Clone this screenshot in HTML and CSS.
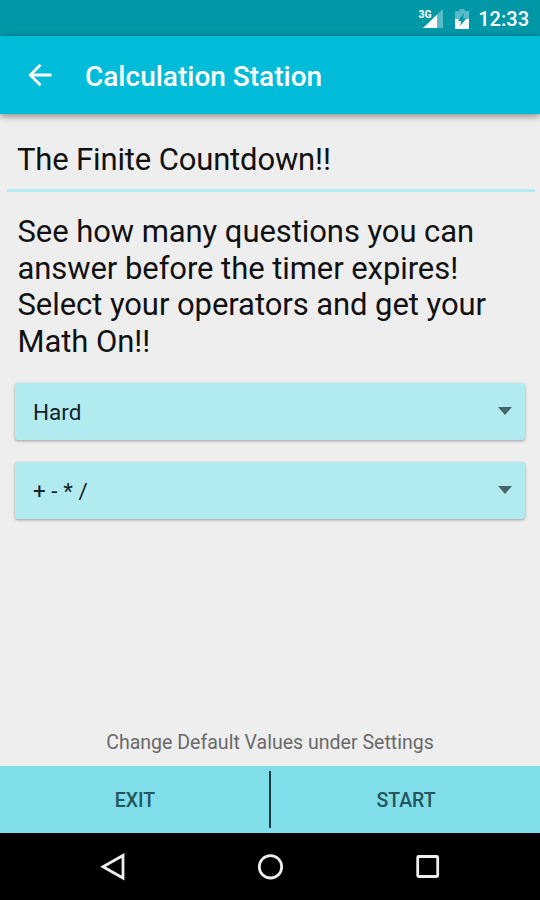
FILE: index.html
```
<!DOCTYPE html>
<html lang="en">
<head>
<meta charset="utf-8">
<title>Calculation Station</title>
<link rel="stylesheet" href="styles.css">
</head>
<body>
<div class="screen">
  <div class="status">
    <svg class="signal" width="26" height="22" viewBox="0 0 26 22">
      <path class="dim" d="M25 1V20H5Z"/>
      <path class="lit" d="M19 6.700V20H5Z"/>
      <text class="network" x="0.500" y="9.500" textLength="13" lengthAdjust="spacingAndGlyphs">3G</text>
    </svg>
    <svg class="battery" width="14" height="20" viewBox="0 0 14 20">
      <path class="dim" d="M4.500 0h5v2H13a1 1 0 0 1 1 1v7H0V3a1 1 0 0 1 1-1h3.500Z"/>
      <path class="lit" d="M0 10h14v9a1 1 0 0 1-1 1H1a1 1 0 0 1-1-1Z"/>
      <path class="bolt" d="M9 4 3 12h3.300L5 17l6.500-7.500H8Z"/>
    </svg>
    <span class="clock">12:33</span>
  </div>
  <header class="appbar">
    <svg class="back" width="24" height="24" viewBox="0 0 24 24"><path d="M23.500 12H2M12.500 1.800 2.300 12l10.200 10.200"/></svg>
    <h1 class="title">Calculation Station</h1>
  </header>
  <main class="content">
    <h2 class="heading">The Finite Countdown!!</h2>
    <p class="intro">See how many questions you can<br>answer before the timer expires!<br>Select your operators and get your<br>Math On!!</p>
    <div class="spinner"><span class="value">Hard</span><svg width="14" height="8" viewBox="0 0 14 8"><path d="M0 0h14L7 8Z"/></svg></div>
    <div class="spinner"><span class="value">+ - * /</span><svg width="14" height="8" viewBox="0 0 14 8"><path d="M0 0h14L7 8Z"/></svg></div>
    <p class="hint">Change Default Values under Settings</p>
  </main>
  <div class="actions">
    <div class="action">EXIT</div>
    <div class="divider"></div>
    <div class="action">START</div>
  </div>
  <nav class="navbar">
    <svg width="28" height="28" viewBox="0 0 28 28"><path d="M24 2.500v22.500L4 13.700Z"/></svg>
    <svg width="28" height="28" viewBox="0 0 28 28"><circle cx="13.500" cy="13.800" r="11.200"/></svg>
    <svg width="28" height="28" viewBox="0 0 28 28"><rect x="3.700" y="3.500" width="20" height="20" rx="1"/></svg>
  </nav>
</div>
</body>
</html>
```

FILE: styles.css
```
* { box-sizing: border-box; }
body { margin: 0; font-family: Roboto, sans-serif; }
h1, h2, p { margin: 0; font-weight: 400; }
svg { display: block; flex: none; }
.screen { width: 540px; height: 900px; display: flex; flex-direction: column; background: #eee; overflow: hidden; }
.status { height: 36px; flex: none; display: flex; align-items: center; justify-content: flex-end; padding: 2px 11px 0 0; background: #0097a7; color: #fff; }
.signal { margin-right: 11px; }
.battery { margin-right: 9px; }
.dim { fill: #fff; fill-opacity: .35; }
.lit { fill: #fff; }
.bolt { fill: #0097a7; }
.network { font: 700 11px Roboto, sans-serif; fill: #fff; }
.clock { font-size: 20px; line-height: 24px; font-weight: 500; }
.appbar { height: 78px; flex: none; display: flex; align-items: center; padding: 2px 0 0 28px; background: #00bcd9; color: #fff; box-shadow: 0 2px 7px rgba(0,0,0,.45); position: relative; }
.back { fill: none; stroke: #fff; stroke-width: 2.800; margin-top: -2px; }
.title { margin: 2px 0 0 33px; font-size: 28px; line-height: 34px; font-weight: 500; white-space: nowrap; }
.content { flex: 1; display: flex; flex-direction: column; padding: 0 15px; }
.heading { margin: 0 -10px 0 -8px; padding: 27px 10px 0; height: 78px; border-bottom: 3px solid #b5eaf0; color: #111; font-size: 31px; line-height: 37px; letter-spacing: -.15px; white-space: nowrap; }
.intro { margin: 22px 0 23px 2.500px; color: #111; font-size: 31px; line-height: 36.600px; letter-spacing: -.07px; white-space: nowrap; }
.spinner { height: 57px; margin-bottom: 22px; flex: none; display: flex; align-items: center; justify-content: space-between; padding: 0 13px 0 18px; border-radius: 3px; background: #b2ebef; box-shadow: 0 1px 3px rgba(0,0,0,.35); }
.spinner svg { fill: #48656c; margin-top: -2px; }
.value { font-size: 22.500px; line-height: 28px; color: #122227; }
.hint { margin-top: auto; padding-bottom: 10px; text-align: center; font-size: 19.550px; line-height: 26px; color: #696969; }
.actions { height: 67px; flex: none; display: flex; align-items: center; background: #80deea; }
.action { flex: 1; text-align: center; font-size: 19.500px; line-height: 26px; font-weight: 500; color: #24545c; padding: 3px 0 0 1px; }
.divider { width: 2px; height: 57px; background: #153b40; }
.navbar { height: 67px; flex: none; display: flex; justify-content: space-between; align-items: center; padding: 0 98px 0 99px; background: #000; }
.navbar svg { fill: none; stroke: #eee; stroke-width: 2.800; }
```
